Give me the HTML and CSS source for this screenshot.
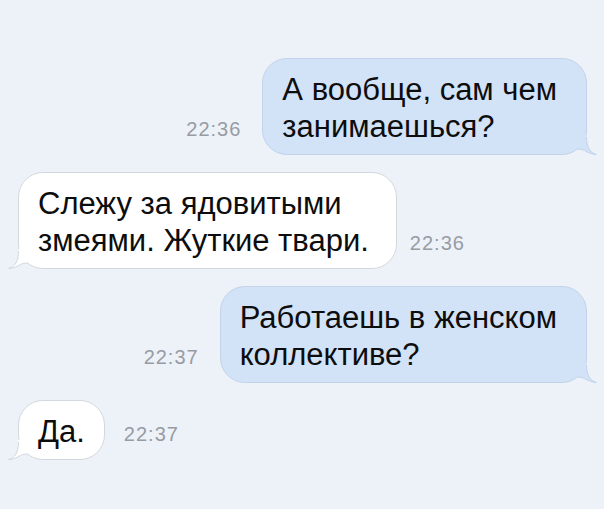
FILE: index.html
```html
<!DOCTYPE html>
<html lang="ru">
<head>
    <meta charset="UTF-8">
    <meta name="viewport" content="width=device-width, initial-scale=1.0">
    <title>Сообщения</title>
    <link rel="stylesheet" href="styles.css">
</head>
<body>
    <div class="chat">
        <div class="row out r1">
            <span class="time">22:36</span>
            <div class="bubble">
                А вообще, сам чем<br>занимаешься?
                <svg class="tail" width="26" height="20" viewBox="0 0 26 20">
                    <path class="fill" d="M7 0 L15.5 0 L15.5 2 C15.5 12 19 18 25.5 19.5 C21 19.5 17 17.5 13.5 15.5 C11 14.2 9 14 7 14.3 Z"/>
                    <path class="edge" d="M15.5 2 C15.5 12 19 18 25.5 19.5 C21 19.5 17 17.5 13.5 15.5 C11 14.2 9 14 7 14.3"/>
                </svg>
            </div>
        </div>
        <div class="row in r2">
            <div class="bubble">
                Слежу за ядовитыми<br>змеями. Жуткие твари.
                <svg class="tail" width="26" height="20" viewBox="0 0 26 20">
                    <path class="fill" d="M7 0 L15.5 0 L15.5 2 C15.5 12 19 18 25.5 19.5 C21 19.5 17 17.5 13.5 15.5 C11 14.2 9 14 7 14.3 Z"/>
                    <path class="edge" d="M15.5 2 C15.5 12 19 18 25.5 19.5 C21 19.5 17 17.5 13.5 15.5 C11 14.2 9 14 7 14.3"/>
                </svg>
            </div>
            <span class="time">22:36</span>
        </div>
        <div class="row out r3">
            <span class="time">22:37</span>
            <div class="bubble">
                Работаешь в женском<br>коллективе?
                <svg class="tail" width="26" height="20" viewBox="0 0 26 20">
                    <path class="fill" d="M7 0 L15.5 0 L15.5 2 C15.5 12 19 18 25.5 19.5 C21 19.5 17 17.5 13.5 15.5 C11 14.2 9 14 7 14.3 Z"/>
                    <path class="edge" d="M15.5 2 C15.5 12 19 18 25.5 19.5 C21 19.5 17 17.5 13.5 15.5 C11 14.2 9 14 7 14.3"/>
                </svg>
            </div>
        </div>
        <div class="row in r4">
            <div class="bubble">
                Да.
                <svg class="tail" width="26" height="20" viewBox="0 0 26 20">
                    <path class="fill" d="M7 0 L15.5 0 L15.5 2 C15.5 12 19 18 25.5 19.5 C21 19.5 17 17.5 13.5 15.5 C11 14.2 9 14 7 14.3 Z"/>
                    <path class="edge" d="M15.5 2 C15.5 12 19 18 25.5 19.5 C21 19.5 17 17.5 13.5 15.5 C11 14.2 9 14 7 14.3"/>
                </svg>
            </div>
            <span class="time">22:37</span>
        </div>
    </div>
</body>
</html>
```

FILE: styles.css
```css
*{
    margin: 0;
    padding: 0;
    box-sizing: border-box;
}
html, body{
    height: 100%;
}
body{
    background: #edf1f8;
    font-family: "Liberation Sans", Arial, sans-serif;
    color: #0d0d0d;
    overflow: hidden;
}
.chat{
    display: flex;
    flex-direction: column;
    gap: 17px;
    padding: 58px 17px 0 18px;
}
.row{
    display: flex;
    align-items: flex-end;
}
.row.out{
    justify-content: flex-end;
}
.bubble{
    position: relative;
    border-radius: 25px;
    padding: 12px 27px 9px 19px;
    font-size: 31px;
    line-height: 37px;
    white-space: nowrap;
}
.out .bubble{
    background: #d2e2f7;
    border: 1px solid #c2d3ea;
    padding-right: 29px;
}
.in .bubble{
    background: #fff;
    border: 1px solid #d3d8df;
}
.time{
    font-size: 20px;
    line-height: 22px;
    letter-spacing: 1px;
    color: #979ca4;
    margin-bottom: 15px;
}
.out .time{
    margin-right: 21px;
}
.in .time{
    margin-left: 13px;
}
/* хвостик пузыря */
.tail{
    position: absolute;
    bottom: -1px;
    right: -11px;
}
.in .tail{
    right: auto;
    left: -11px;
    transform: scaleX(-1);
}
.out .tail .fill{
    fill: #d2e2f7;
}
.in .tail .fill{
    fill: #fff;
}
.tail .edge{
    fill: none;
    stroke-width: 1;
}
.out .tail .edge{
    stroke: #c2d3ea;
}
.in .tail .edge{
    stroke: #d3d8df;
}
.r4 .bubble{
    padding-right: 19px;
}
.r4 .time{
    margin-left: 19px;
}
```
